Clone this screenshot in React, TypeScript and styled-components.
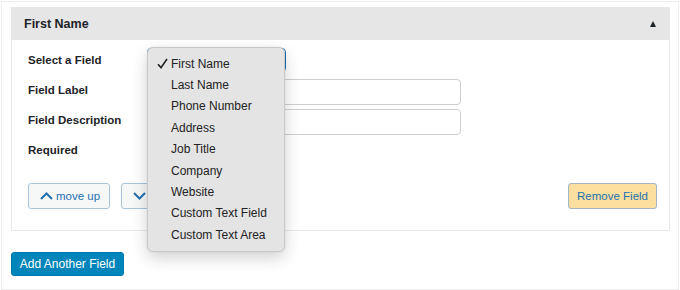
import styled, { createGlobalStyle } from 'styled-components';

const GlobalStyle = createGlobalStyle`
  html, body {
    margin: 0;
    padding: 0;
    background: #ffffff;
  }
  body {
    font-family: "Liberation Sans", Arial, sans-serif;
    color: #1d2327;
  }
  * {
    box-sizing: border-box;
  }
`;

const fieldOptions = [
  'First Name',
  'Last Name',
  'Phone Number',
  'Address',
  'Job Title',
  'Company',
  'Website',
  'Custom Text Field',
  'Custom Text Area',
];

// Styled components
const Frame = styled.div`
  margin: 1px;
  width: 678px;
  height: 289px;
  border: 1px solid #ededed;
  padding: 5px 0 0 9px;
`;

const Panel = styled.div`
  width: 659px;
  border: 1px solid #e8e8e8;
  background: #ffffff;
`;

const PanelHeader = styled.div`
  height: 32px;
  background: #e6e6e6;
  display: flex;
  align-items: center;
  justify-content: space-between;
  padding: 0 12px 1px;
`;

const PanelTitle = styled.h3`
  margin: 0;
  font-size: 12.5px;
  font-weight: 700;
  color: #1d2327;
`;

const Toggle = styled.span`
  width: 0;
  height: 0;
  border-left: 3.5px solid transparent;
  border-right: 3.5px solid transparent;
  border-bottom: 6px solid #1d2327;
  margin-right: 1px;
`;

const PanelBody = styled.div`
  padding: 5px 12px 21px 16px;
`;

const FormGrid = styled.div`
  display: grid;
  grid-template-columns: 119px 1fr;
  grid-template-rows: repeat(4, 30px);
`;

const Label = styled.label`
  align-self: center;
  font-size: 11.5px;
  font-weight: 700;
  color: #1d2327;
`;

const SelectCell = styled.div`
  position: relative;
  align-self: center;
  width: 139px;
  height: 24px;
`;

const SelectBox = styled.div`
  width: 100%;
  height: 100%;
  border: 1px solid #2271b1;
  border-radius: 4px;
  background: #ffffff;
`;

const TextInput = styled.input`
  align-self: end;
  width: 314px;
  height: 26px;
  border: 1px solid #cfcfcf;
  border-radius: 4px;
  background: #ffffff;
  padding: 0 8px;
`;

const Checkbox = styled.span`
  align-self: center;
  width: 16px;
  height: 16px;
  border: 1px solid #8c8f94;
  border-radius: 4px;
`;

const Menu = styled.ul`
  position: absolute;
  top: -1px;
  left: 0;
  z-index: 10;
  width: 138px;
  margin: 0;
  padding: 5px 0;
  list-style: none;
  background: #e4e4e4;
  border: 1px solid #c9c9c9;
  border-radius: 6px;
  box-shadow: 0 6px 16px rgba(0, 0, 0, 0.18), 0 0 2px rgba(0, 0, 0, 0.08);
`;

const MenuItem = styled.li`
  position: relative;
  height: 21.4px;
  display: flex;
  align-items: center;
  padding-left: 23px;
  font-size: 12px;
  color: #222222;
  white-space: nowrap;
`;

const Check = styled.svg`
  position: absolute;
  left: 9px;
  top: 5px;
`;

const Actions = styled.div`
  display: flex;
  align-items: center;
  gap: 11px;
  margin-top: 18px;
`;

const MoveButton = styled.button`
  display: inline-flex;
  align-items: center;
  gap: 3px;
  height: 26px;
  padding: 0 9px 0 11px;
  border: 1px solid #a9c4dc;
  border-radius: 3px;
  background: #f6f7f7;
  color: #2271b1;
  font-family: inherit;
  font-size: 11.5px;
`;

const RemoveButton = styled.button`
  margin-left: auto;
  height: 26px;
  padding: 0 8px;
  border: 1px solid #a3b6c8;
  border-radius: 3px;
  background: #fde09f;
  color: #2271b1;
  font-family: inherit;
  font-size: 11.5px;
`;

const AddButton = styled.button`
  margin-top: 21px;
  height: 24px;
  width: 113px;
  padding: 0;
  border: 1px solid #0079ac;
  border-radius: 3px;
  background: #0085ba;
  color: #ffffff;
  font-family: inherit;
  font-size: 12px;
`;

const Chevron = ({ up }: { up?: boolean }) => (
  <svg width="13" height="8" viewBox="0 0 13 8">
    <path
      d={up ? 'M1 7 L6.5 1.5 L12 7' : 'M1 1 L6.5 6.5 L12 1'}
      fill="none"
      stroke="#2271b1"
      strokeWidth="2"
    />
  </svg>
);

const App = () => {
  const selected = 'First Name';

  return (
    <>
      <GlobalStyle />
      <Frame>
        <Panel>
          <PanelHeader>
            <PanelTitle>First Name</PanelTitle>
            <Toggle />
          </PanelHeader>
          <PanelBody>
            <FormGrid>
              <Label>Select a Field</Label>
              <SelectCell>
                <SelectBox />
                <Menu>
                  {fieldOptions.map((option) => (
                    <MenuItem key={option}>
                      {option === selected && (
                        <Check width="11" height="11" viewBox="0 0 11 11">
                          <path d="M1 6.2 L4 9.6 L10 1" fill="none" stroke="#222" strokeWidth="1.6" />
                        </Check>
                      )}
                      {option}
                    </MenuItem>
                  ))}
                </Menu>
              </SelectCell>

              <Label>Field Label</Label>
              <TextInput type="text" />

              <Label>Field Description</Label>
              <TextInput type="text" />

              <Label>Required</Label>
              <Checkbox />
            </FormGrid>

            <Actions>
              <MoveButton>
                <Chevron up />
                move up
              </MoveButton>
              <MoveButton>
                <Chevron />
                move down
              </MoveButton>
              <RemoveButton>Remove Field</RemoveButton>
            </Actions>
          </PanelBody>
        </Panel>
        <AddButton>Add Another Field</AddButton>
      </Frame>
    </>
  );
};

export default App;
